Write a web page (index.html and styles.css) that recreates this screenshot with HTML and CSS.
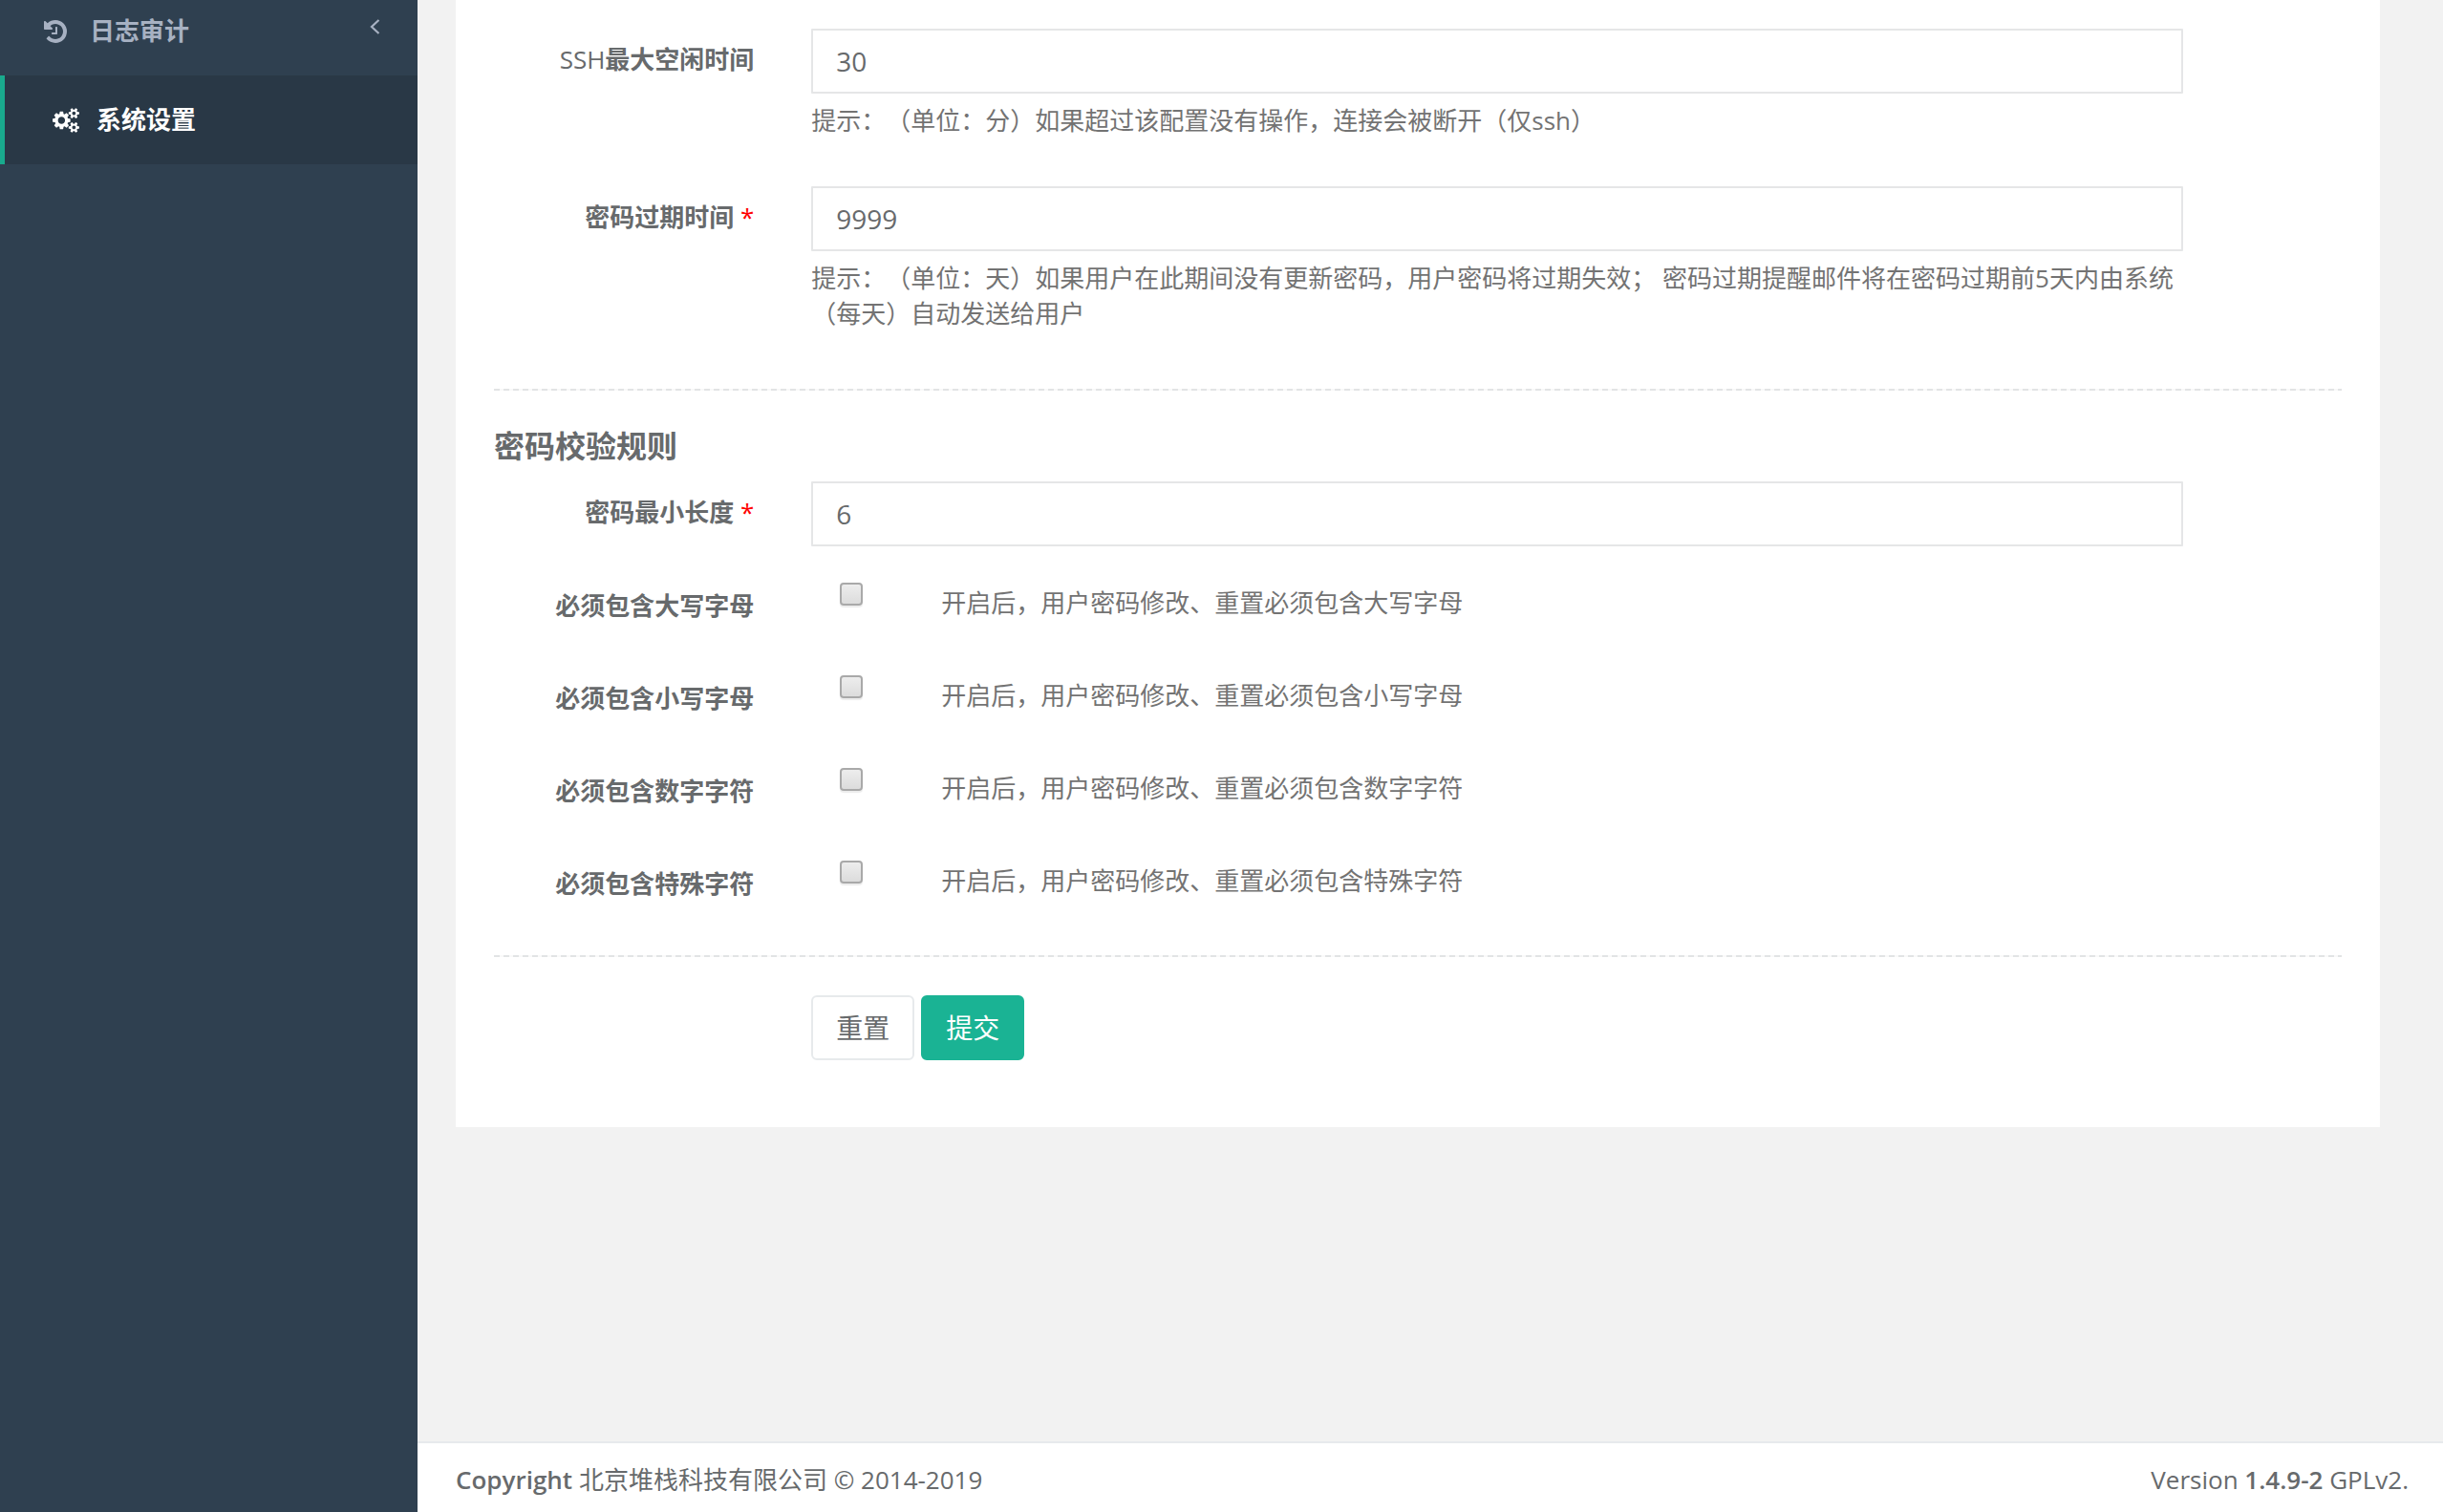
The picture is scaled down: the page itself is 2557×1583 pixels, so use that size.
FILE: index.html
```html
<!DOCTYPE html>
<html lang="zh-CN">
<head>
<meta charset="utf-8">
<meta name="viewport" content="width=device-width, initial-scale=1">
<title>系统设置</title>
<link rel="stylesheet" href="styles.css">
</head>
<body>
<div class="app">
  <nav class="sidebar">
    <ul class="menu">
      <li class="menu-item">
        <a class="menu-link" href="#">
          <svg class="icon-history" viewBox="0 0 1536 1792" aria-hidden="true"><path fill="currentColor" d="M1536 896q0 156-61 298t-164 245-245 164-298 61q-172 0-327-72.500T177 1387q-7-10-6.500-22.500t8.500-20.500l137-138q10-9 25-9 16 2 23 12 73 95 179 147t225 52q104 0 198.500-40.500T1130 1258t109.500-163.500T1280 896t-40.500-198.500T1130 534 966.500 424.500 768 384q-98 0-188 35.500T420 521l137 138q31 30 14 69-17 40-59 40H64q-26 0-45-19T0 704V256q0-42 40-59 39-17 69 14l130 129q107-101 244.500-156.500T768 128q156 0 298 61t245 164 164 245 61 298zM896 608v448q0 14-9 23t-23 9H544q-14 0-23-9t-9-23v-64q0-14 9-23t23-9h224V608q0-14 9-23t23-9h64q14 0 23 9t9 23z"/></svg>
          <span>日志审计</span>
          <svg class="arrow" viewBox="0 0 12 18" aria-hidden="true"><path fill="none" stroke="currentColor" stroke-width="2.200" d="M10.500 2 3 9l7.500 7"/></svg>
        </a>
      </li>
      <li class="menu-item active">
        <a class="menu-link" href="#">
          <svg class="icon-cogs" viewBox="0 0 1920 1792" aria-hidden="true"><path fill="currentColor" d="M896 896q0-106-75-181t-181-75-181 75-75 181 75 181 181 75 181-75 75-181zm768 512q0-52-38-90t-90-38-90 38-38 90q0 53 37.500 90.500t90.500 37.500 90.500-37.500 37.500-90.500zm0-1024q0-52-38-90t-90-38-90 38-38 90q0 53 37.500 90.500T1536 512t90.500-37.500T1664 384zm-384 421v185q0 10-7 19.500t-16 10.500l-155 24q-11 35-32 76 34 48 90 115 7 11 7 20 0 12-7 19-23 30-82.500 89.500T999 1423q-11 0-21-7l-115-90q-37 19-77 31-11 108-23 155-7 24-30 24H547q-11 0-20-7.500t-10-17.500l-23-153q-34-10-75-31l-118 89q-7 7-20 7-11 0-21-8-144-133-144-160 0-9 7-19 10-14 41-53t47-61q-23-44-35-82l-152-24q-10-1-17-9.500T0 987V802q0-10 7-19.500T23 772l155-24q11-35 32-76-34-48-90-115-7-11-7-20 0-12 7-20 22-30 82-89t79-59q11 0 21 7l115 90q34-18 77-32 11-108 23-154 7-24 30-24h186q11 0 20 7.500t10 17.500l23 153q34 10 75 31l118-89q8-7 20-7 11 0 21 8 144 133 144 160 0 8-7 19-12 16-42 54t-45 60q23 48 34 82l152 23q10 2 17 10.500t7 19.500zm640 533v140q0 16-149 31-12 27-30 52 51 113 51 138 0 4-4 7-122 71-124 71-8 0-46-47t-52-68q-20 2-30 2t-30-2q-14 21-52 68t-46 47q-2 0-124-71-4-3-4-7 0-25 51-138-18-25-30-52-149-15-149-31v-140q0-16 149-31 13-29 30-52-51-113-51-138 0-4 4-7 4-2 35-20t59-34 30-16q8 0 46 46.500t52 67.500q20-2 30-2t30 2q51-71 92-112l6-2q4 0 124 70 4 3 4 7 0 25-51 138 17 23 30 52 149 15 149 31zm0-1024v140q0 16-149 31-12 27-30 52 51 113 51 138 0 4-4 7-122 71-124 71-8 0-46-47t-52-68q-20 2-30 2t-30-2q-14 21-52 68t-46 47q-2 0-124-71-4-3-4-7 0-25 51-138-18-25-30-52-149-15-149-31V314q0-16 149-31 13-29 30-52-51-113-51-138 0-4 4-7 4-2 35-20t59-34 30-16q8 0 46 46.500t52 67.500q20-2 30-2t30 2q51-71 92-112l6-2q4 0 124 70 4 3 4 7 0 25-51 138 17 23 30 52 149 15 149 31z"/></svg>
          <span>系统设置</span>
        </a>
      </li>
    </ul>
  </nav>

  <div class="page">
    <main class="content">
      <form class="panel">
        <div class="form-row">
          <label class="form-label" for="idle"><span class="latin">SSH</span>最大空闲时间</label>
          <div class="form-field">
            <input class="text-input" id="idle" type="text" value="30">
            <p class="help">提示：（单位：分）如果超过该配置没有操作，连接会被断开（仅ssh）</p>
          </div>
        </div>
        <div class="form-row">
          <label class="form-label" for="expire">密码过期时间 <span class="required">*</span></label>
          <div class="form-field">
            <input class="text-input" id="expire" type="text" value="9999">
            <p class="help">提示：（单位：天）如果用户在此期间没有更新密码，用户密码将过期失效； 密码过期提醒邮件将在密码过期前5天内由系统（每天）自动发送给用户</p>
          </div>
        </div>

        <hr class="divider">

        <h3 class="section-title">密码校验规则</h3>
        <div class="form-row">
          <label class="form-label" for="minlen">密码最小长度 <span class="required">*</span></label>
          <div class="form-field">
            <input class="text-input" id="minlen" type="text" value="6">
          </div>
        </div>
        <div class="form-row">
          <label class="form-label" for="upper">必须包含大写字母</label>
          <div class="form-field check-field">
            <input class="checkbox" id="upper" type="checkbox">
            <span class="check-help">开启后，用户密码修改、重置必须包含大写字母</span>
          </div>
        </div>
        <div class="form-row">
          <label class="form-label" for="lower">必须包含小写字母</label>
          <div class="form-field check-field">
            <input class="checkbox" id="lower" type="checkbox">
            <span class="check-help">开启后，用户密码修改、重置必须包含小写字母</span>
          </div>
        </div>
        <div class="form-row">
          <label class="form-label" for="digit">必须包含数字字符</label>
          <div class="form-field check-field">
            <input class="checkbox" id="digit" type="checkbox">
            <span class="check-help">开启后，用户密码修改、重置必须包含数字字符</span>
          </div>
        </div>
        <div class="form-row">
          <label class="form-label" for="special">必须包含特殊字符</label>
          <div class="form-field check-field">
            <input class="checkbox" id="special" type="checkbox">
            <span class="check-help">开启后，用户密码修改、重置必须包含特殊字符</span>
          </div>
        </div>

        <hr class="divider">

        <div class="form-row">
          <div class="form-field actions">
            <button class="btn btn-default" type="reset">重置</button>
            <button class="btn btn-primary" type="submit">提交</button>
          </div>
        </div>
      </form>
    </main>

    <footer class="footer">
      <div><strong>Copyright</strong> 北京堆栈科技有限公司 © 2014-2019</div>
      <div>Version <strong>1.4.9-2</strong> GPLv2.</div>
    </footer>
  </div>
</div>
</body>
</html>
```
FILE: styles.css
```css
* {
  box-sizing: border-box;
}

body {
  margin: 0;
  font-family: "Open Sans", "Noto Sans CJK SC", sans-serif;
  font-size: 26px;
  line-height: 37px;
  color: #676a6c;
  background: #2f4050;
  text-spacing-trim: space-all;
}

.app {
  display: flex;
  min-height: 100vh;
}

/* Sidebar */

.sidebar {
  flex: 0 0 437px;
  background: #2f4050;
}

.menu {
  margin: 0;
  padding: 0;
  list-style: none;
}

.menu-link {
  display: flex;
  align-items: center;
  gap: 24px;
  padding: 28px 39px 28px 46px;
  font-weight: 700;
  color: #a7b1c2;
  text-decoration: none;
}

.menu-item:first-child .menu-link {
  padding-top: 14px;
}

.menu-item.active {
  border-left: 5px solid #19aa8d;
  background: #293846;
}

.active .menu-link {
  gap: 18px;
  padding-left: 50px;
  color: #fff;
}

.icon-history {
  width: 24px;
  height: 28px;
}

.icon-cogs {
  width: 28px;
  height: 26px;
}

.arrow {
  width: 12px;
  height: 18px;
  margin-left: auto;
  align-self: flex-start;
  margin-top: 5px;
}

/* Main column */

.page {
  flex: 1;
  min-width: 0;
  display: flex;
  flex-direction: column;
  background: #f2f2f2;
}

.content {
  flex: 1;
  padding: 0 66px 40px 40px;
}

.panel {
  padding: 30px 40px 40px;
  background: #fff;
}

.form-row {
  display: flex;
  margin: 0 -30px 30px;
}

.form-label {
  width: calc(100% / 6);
  padding: 14px 30px 0;
  font-weight: 700;
  text-align: right;
}

.latin {
  font-weight: 400;
}

.required {
  font-weight: 400;
  color: #f00;
}

.form-field {
  width: 75%;
  padding: 0 30px;
}

.text-input {
  display: block;
  width: 100%;
  height: 68px;
  padding: 12px 24px;
  border: 2px solid #e5e6e7;
  border-radius: 1px;
  background: #fff;
  color: inherit;
  font: inherit;
  font-size: 28px;
}

.help {
  margin: 10px 0 20px;
  color: #737373;
}

.divider {
  height: 2px;
  margin: 40px 0;
  border: 0;
  background: repeating-linear-gradient(90deg, #e2e4e5 0 6px, #f9f9f9 6px 10px);
}

.form-row:has(+ .divider) {
  margin-bottom: 0;
}

.section-title {
  margin: 0 0 20px;
  font-size: 32px;
  line-height: 35px;
  font-weight: 700;
}

.check-field {
  display: flex;
  align-items: flex-start;
  gap: 82px;
  min-height: 67px;
  padding: 8px 60px 0;
}

.checkbox {
  flex: none;
  appearance: none;
  width: 24px;
  height: 24px;
  margin: 0;
  border: 2px solid #a9a9a9;
  border-radius: 4px;
  background: linear-gradient(#ededed, #dcdcdc);
  box-shadow: 0 2px 1px #ececec;
}

.checkbox:checked {
  background: #1ab394;
}

.check-help {
  padding-top: 3px;
  color: #737373;
}

.actions {
  display: flex;
  gap: 7px;
  margin-left: calc(100% / 6);
}

.btn {
  height: 68px;
  padding: 0 24px;
  border: 2px solid #e7eaec;
  border-radius: 6px;
  font: inherit;
  font-size: 28px;
  cursor: pointer;
}

.btn-default {
  background: #fff;
  color: inherit;
}

.btn-primary {
  border-color: #1ab394;
  background: #1ab394;
  color: #fff;
}

/* Footer */

.footer {
  display: flex;
  justify-content: space-between;
  padding: 20px 36px 15px 40px;
  border-top: 2px solid #e7eaec;
  background: #fff;
}

.footer strong {
  font-weight: 600;
}
```
